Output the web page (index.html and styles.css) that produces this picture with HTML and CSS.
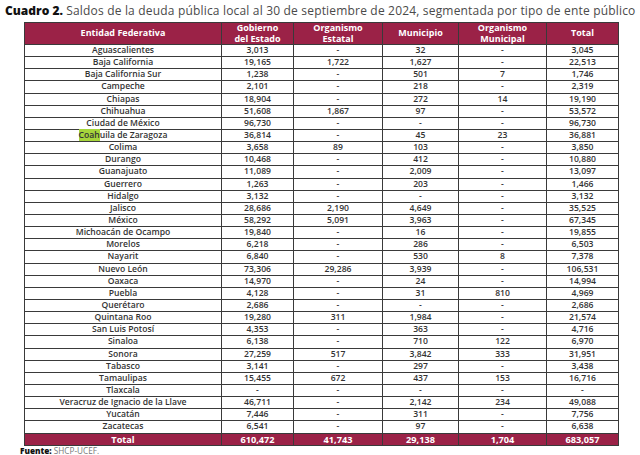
FILE: index.html
```html
<!DOCTYPE html>
<html lang="es">
<head>
<meta charset="utf-8">
<link rel="stylesheet" href="styles.css">
</head>
<body>
<div class="page">
  <p class="title"><b>Cuadro 2.</b> Saldos de la deuda pública local al 30 de septiembre de 2024, segmentada por tipo de ente público</p>
  <table class="debt">
    <colgroup>
      <col class="c-ent"><col class="c-gob"><col class="c-oe"><col class="c-mun"><col class="c-om"><col class="c-tot">
    </colgroup>
    <thead>
      <tr><th>Entidad Federativa</th><th>Gobierno<br>del Estado</th><th>Organismo<br>Estatal</th><th>Municipio</th><th>Organismo<br>Municipal</th><th>Total</th></tr>
    </thead>
    <tbody>
      <tr><td>Aguascalientes</td><td>3,013</td><td>-</td><td>32</td><td>-</td><td>3,045</td></tr>
      <tr><td>Baja California</td><td>19,165</td><td>1,722</td><td>1,627</td><td>-</td><td>22,513</td></tr>
      <tr><td>Baja California Sur</td><td>1,238</td><td>-</td><td>501</td><td>7</td><td>1,746</td></tr>
      <tr><td>Campeche</td><td>2,101</td><td>-</td><td>218</td><td>-</td><td>2,319</td></tr>
      <tr><td>Chiapas</td><td>18,904</td><td>-</td><td>272</td><td>14</td><td>19,190</td></tr>
      <tr><td>Chihuahua</td><td>51,608</td><td>1,867</td><td>97</td><td>-</td><td>53,572</td></tr>
      <tr><td>Ciudad de México</td><td>96,730</td><td>-</td><td>-</td><td>-</td><td>96,730</td></tr>
      <tr><td><mark class="hl">Coah</mark>uila de Zaragoza</td><td>36,814</td><td>-</td><td>45</td><td>23</td><td>36,881</td></tr>
      <tr><td>Colima</td><td>3,658</td><td>89</td><td>103</td><td>-</td><td>3,850</td></tr>
      <tr><td>Durango</td><td>10,468</td><td>-</td><td>412</td><td>-</td><td>10,880</td></tr>
      <tr><td>Guanajuato</td><td>11,089</td><td>-</td><td>2,009</td><td>-</td><td>13,097</td></tr>
      <tr><td>Guerrero</td><td>1,263</td><td>-</td><td>203</td><td>-</td><td>1,466</td></tr>
      <tr><td>Hidalgo</td><td>3,132</td><td>-</td><td>-</td><td>-</td><td>3,132</td></tr>
      <tr><td>Jalisco</td><td>28,686</td><td>2,190</td><td>4,649</td><td>-</td><td>35,525</td></tr>
      <tr><td>México</td><td>58,292</td><td>5,091</td><td>3,963</td><td>-</td><td>67,345</td></tr>
      <tr><td>Michoacán de Ocampo</td><td>19,840</td><td>-</td><td>16</td><td>-</td><td>19,855</td></tr>
      <tr><td>Morelos</td><td>6,218</td><td>-</td><td>286</td><td>-</td><td>6,503</td></tr>
      <tr><td>Nayarit</td><td>6,840</td><td>-</td><td>530</td><td>8</td><td>7,378</td></tr>
      <tr><td>Nuevo León</td><td>73,306</td><td>29,286</td><td>3,939</td><td>-</td><td>106,531</td></tr>
      <tr><td>Oaxaca</td><td>14,970</td><td>-</td><td>24</td><td>-</td><td>14,994</td></tr>
      <tr><td>Puebla</td><td>4,128</td><td>-</td><td>31</td><td>810</td><td>4,969</td></tr>
      <tr><td>Querétaro</td><td>2,686</td><td>-</td><td>-</td><td>-</td><td>2,686</td></tr>
      <tr><td>Quintana Roo</td><td>19,280</td><td>311</td><td>1,984</td><td>-</td><td>21,574</td></tr>
      <tr><td>San Luis Potosí</td><td>4,353</td><td>-</td><td>363</td><td>-</td><td>4,716</td></tr>
      <tr><td>Sinaloa</td><td>6,138</td><td>-</td><td>710</td><td>122</td><td>6,970</td></tr>
      <tr><td>Sonora</td><td>27,259</td><td>517</td><td>3,842</td><td>333</td><td>31,951</td></tr>
      <tr><td>Tabasco</td><td>3,141</td><td>-</td><td>297</td><td>-</td><td>3,438</td></tr>
      <tr><td>Tamaulipas</td><td>15,455</td><td>672</td><td>437</td><td>153</td><td>16,716</td></tr>
      <tr><td>Tlaxcala</td><td>-</td><td>-</td><td>-</td><td>-</td><td>-</td></tr>
      <tr><td>Veracruz de Ignacio de la Llave</td><td>46,711</td><td>-</td><td>2,142</td><td>234</td><td>49,088</td></tr>
      <tr><td>Yucatán</td><td>7,446</td><td>-</td><td>311</td><td>-</td><td>7,756</td></tr>
      <tr><td>Zacatecas</td><td>6,541</td><td>-</td><td>97</td><td>-</td><td>6,638</td></tr>
    </tbody>
    <tfoot>
      <tr><td>Total</td><td>610,472</td><td>41,743</td><td>29,138</td><td>1,704</td><td>683,057</td></tr>
    </tfoot>
  </table>
  <p class="source"><b>Fuente:</b> SHCP-UCEF.</p>
</div>
</body>
</html>
```

FILE: styles.css
```css
html, body {
  margin: 0;
  padding: 0;
  background: #ffffff;
}
.page {
  width: 640px;
  height: 455px;
  overflow: hidden;
  font-family: "Open Sans", "Liberation Sans", sans-serif;
}
.title {
  margin: 0;
  padding: 3px 0 0 5px;
  font-size: 12px;
  letter-spacing: 0.18px;
  line-height: 15px;
  color: #4a4a4a;
  white-space: nowrap;
}
.title b {
  color: #111111;
  font-weight: 800;
  letter-spacing: 0;
}
.debt {
  margin: 4px 0 0 24px;
  width: 594px;
  table-layout: fixed;
  border-collapse: collapse;
  font-size: 8.6px;
  font-weight: 600;
  color: #333333;
  text-align: center;
}
.c-ent { width: 197px; }
.c-gob { width: 72px; }
.c-oe { width: 89px; }
.c-mun { width: 76px; }
.c-om { width: 88px; }
.c-tot { width: 72px; }
.debt th {
  background: #9b2247;
  color: #ffffff;
  font-weight: 700;
  font-size: 9px;
  line-height: 10.5px;
  height: 20px;
  padding: 0;
  border: 1px solid #3a3a3a;
}
.debt td {
  height: 11.15px;
  padding: 0;
  line-height: 11px;
  border: 1px solid #3a3a3a;
  white-space: nowrap;
}
.debt tfoot td {
  background: #9b2247;
  color: #ffffff;
  font-weight: 700;
  font-size: 9.2px;
  height: 9.4px;
}
.hl {
  background: #a6d53b;
  color: inherit;
}
.source {
  margin: 0 0 0 20px;
  font-size: 8.2px;
  line-height: 10px;
  color: #777777;
}
.source b {
  color: #111111;
  font-weight: 800;
}
```
